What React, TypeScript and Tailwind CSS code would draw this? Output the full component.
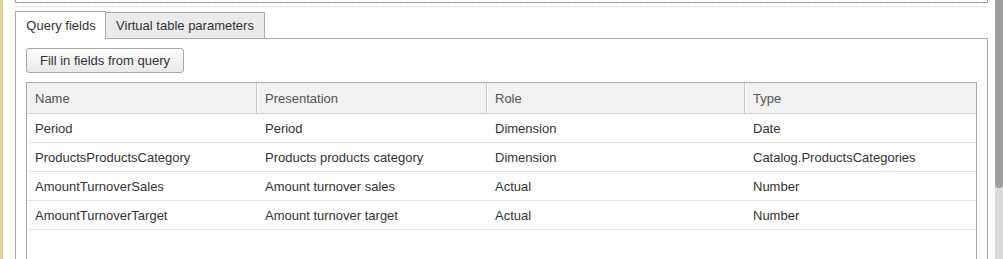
import React from 'react'

const rows = [
  ['Period', 'Period', 'Dimension', 'Date'],
  ['ProductsProductsCategory', 'Products products category', 'Dimension', 'Catalog.ProductsCategories'],
  ['AmountTurnoverSales', 'Amount turnover sales', 'Actual', 'Number'],
  ['AmountTurnoverTarget', 'Amount turnover target', 'Actual', 'Number'],
]
const heads = ['Name', 'Presentation', 'Role', 'Type']

export default function App() {
  return (
    <div className="flex h-[259px] w-[1003px] overflow-hidden bg-white font-['Liberation_Sans',Arial,sans-serif] text-[13px] leading-none text-[#333]">
      <div className="w-[3px] bg-[#dcd39e]" />
      <div className="ml-[12px] flex w-[973px] flex-col">
        <div className="h-[3px] border-x border-b border-[#a4a4a4]" />
        <div className="mt-[3px] h-px bg-[repeating-linear-gradient(90deg,#d2d2d2_0_4px,transparent_4px_6px)]" />
        <div className="mt-[4px] flex h-[27px] items-end">
          <div className="relative z-10 -mb-px flex h-[28px] w-[91px] items-center justify-center border border-b-0 border-[#aaa] bg-white pl-px text-[#333]">
            Query fields
          </div>
          <div className="flex h-[26px] w-[159px] items-center justify-center border-t border-r border-[#aaa] bg-[#ebebeb] text-[#333]">
            Virtual table parameters
          </div>
        </div>
        <div className="flex flex-1 flex-col border border-b-0 border-[#aaa] px-[10px] pt-[9px]">
          <button className="flex h-[25px] w-[158px] items-center justify-center rounded-[3px] border border-[#a9a9a9] bg-[linear-gradient(#ffffff,#e9e9e9)] text-[#333]">
            Fill in fields from query
          </button>
          <div className="mt-[9px] flex-1 border border-b-0 border-[#a9a9a9]">
            <div className="grid h-[31px] grid-cols-[230px_230px_258px_1fr] border-b border-[#cdcdcd] bg-[#f2f2f2] text-[#555]">
              {heads.map((h, i) => (
                <div key={h} className={'flex items-center pl-[8px] ' + (i < 3 ? 'border-r border-[#c8c8c8] ' : '') + (i > 0 ? 'shadow-[inset_1px_0_0_#fff]' : '')}>
                  {h}
                </div>
              ))}
            </div>
            {rows.map((r, ri) => (
              <div key={ri} className="grid h-[29px] grid-cols-[230px_230px_258px_1fr] border-b border-[#e3e3e3]">
                {r.map((c, ci) => (
                  <div key={ci} className="flex items-center pl-[8px]">{c}</div>
                ))}
              </div>
            ))}
          </div>
        </div>
      </div>
      <div className="ml-[7px] flex w-[8px] flex-col bg-[#dadada]">
        <div className="h-[188px] rounded-b-[4px] bg-[#9e9e9e]" />
      </div>
    </div>
  )
}
